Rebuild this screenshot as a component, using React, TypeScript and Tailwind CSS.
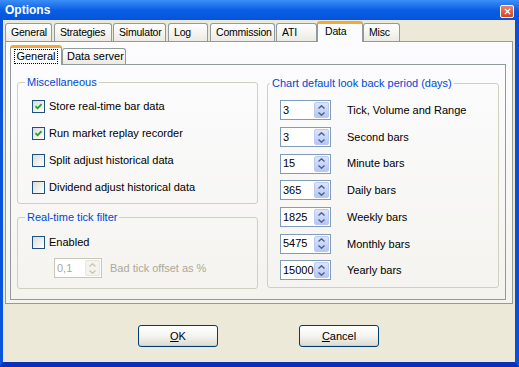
import React from "react";

type Tab = { label: string; width: number; ml: number; selected?: boolean };

const topTabs: Tab[] = [
  { label: "General", width: 47, ml: 0 },
  { label: "Strategies", width: 58, ml: 2 },
  { label: "Simulator", width: 53, ml: 1 },
  { label: "Log", width: 40, ml: 2 },
  { label: "Commission", width: 65, ml: 2 },
  { label: "ATI", width: 41, ml: 1 },
  { label: "Data", width: 46, ml: 0, selected: true },
  { label: "Misc", width: 37, ml: 0 },
];

const lookBack = [
  { value: "3", label: "Tick, Volume and Range" },
  { value: "3", label: "Second bars" },
  { value: "15", label: "Minute bars" },
  { value: "365", label: "Daily bars" },
  { value: "1825", label: "Weekly bars" },
  { value: "5475", label: "Monthly bars" },
  { value: "15000", label: "Yearly bars" },
];

function Check({ checked, label }: { checked?: boolean; label: string }) {
  return (
    <div className="flex h-[27px] items-center">
      <span className="flex h-[13px] w-[13px] shrink-0 items-center justify-center border border-[#1c5180] bg-linear-to-br from-[#dcdcd7] to-white">
        {checked && (
          <svg viewBox="0 0 7 7" className="h-[7px] w-[7px]">
            <path d="M0.5 3.2 L2.6 5.3 L6.5 1.2" stroke="#21a121" strokeWidth="1.8" fill="none" />
          </svg>
        )}
      </span>
      <span className="ml-[4px]">{label}</span>
    </div>
  );
}

function SpinArrows({ disabled }: { disabled?: boolean }) {
  const fill = disabled ? "#c9c7ba" : "#4d6185";
  return (
    <div
      className={
        "flex h-[16px] w-[15px] shrink-0 flex-col rounded-[2px] border " +
        (disabled
          ? "border-[#e8e6dc] bg-[#f4f3ee]"
          : "border-[#b9c9ef] bg-linear-to-b from-[#dbe5fc] to-[#b4c7f4]")
      }
    >
      <span className="flex flex-1 items-center justify-center">
        <svg viewBox="0 0 7 4" className="h-[4px] w-[7px]">
          <path d="M0.5 3.5 L3.5 0.8 L6.5 3.5" stroke={fill} strokeWidth="1.4" fill="none" />
        </svg>
      </span>
      <span className="flex flex-1 items-center justify-center">
        <svg viewBox="0 0 7 4" className="h-[4px] w-[7px]">
          <path d="M0.5 0.5 L3.5 3.2 L6.5 0.5" stroke={fill} strokeWidth="1.4" fill="none" />
        </svg>
      </span>
    </div>
  );
}

function Spin({ value, disabled, width }: { value: string; disabled?: boolean; width: string }) {
  return (
    <div
      className={
        "flex h-[20px] shrink-0 items-center border pl-[2px] pr-[1px] " +
        width +
        (disabled ? " border-[#c9c7ba] bg-white text-[#aca899]" : " border-[#7f9db9] bg-white text-black")
      }
    >
      <span className="flex-1 leading-none">{value}</span>
      <SpinArrows disabled={disabled} />
    </div>
  );
}

function XpButton({ label }: { label: string }) {
  return (
    <button
      type="button"
      className="flex h-[22px] w-[80px] items-center justify-center rounded-[3px] border border-[#003c74] bg-linear-to-b from-white via-[#f4f4f0] to-[#dcdad0] text-black shadow-[inset_0_-1px_0_#d6d0c5]"
    >
      <span>
        <span className="underline">{label[0]}</span>
        {label.slice(1)}
      </span>
    </button>
  );
}

export default function App() {
  return (
    <div className="flex h-[367px] w-[519px] flex-col bg-[#ece9d8] font-['Liberation_Sans',Arial,sans-serif] text-[11px] text-black">
      {/* Title bar */}
      <div className="flex h-[20px] shrink-0 items-center justify-between bg-linear-to-b from-[#3c8ef6] via-[#0a5fe4] to-[#0653dc] pl-[5px] pr-[5px]">
        <span className="text-[12px] font-bold text-white">Options</span>
        <span className="mt-[2px] flex h-[13px] w-[14px] items-center justify-center rounded-[2px] border border-white bg-linear-to-b from-[#e9826a] to-[#d4451f]">
          <svg viewBox="0 0 8 8" className="h-[7px] w-[7px]">
            <path d="M1 1 L7 7 M7 1 L1 7" stroke="white" strokeWidth="1.6" />
          </svg>
        </span>
      </div>

      {/* Body */}
      <div className="flex flex-1 flex-col border-b-[5px] border-l-[3px] border-r-[4px] border-b-[#0a2fb8] border-l-[#0a55dc] border-r-[#0a4fd6]">
        {/* Top tabs */}
        <div className="flex h-[21px] shrink-0 items-end pl-[2px] text-[10.5px] tracking-[-0.2px]">
          {topTabs.map((t) => (
            <div
              key={t.label}
              style={{ width: t.width, marginLeft: t.ml }}
              className={
                "flex shrink-0 items-center overflow-hidden whitespace-nowrap rounded-t-[3px] border border-b-0 border-[#919b9c] pl-[5px] " +
                (t.selected
                  ? "relative z-10 mb-[-1px] h-[21px] border-t-[3px] border-t-[#f3a83a] bg-[#fcfcfe] pb-[2px] pl-[7px]"
                  : "h-[18px] bg-linear-to-b from-white to-[#eceae2]")
              }
            >
              {t.label}
            </div>
          ))}
        </div>

        {/* Outer tab panel */}
        <div className="mx-[2px] flex h-[263px] shrink-0 flex-col border border-[#919b9c] bg-linear-to-b from-[#fcfcfe] to-[#f4f3ee] pl-[4px]">
          {/* Sub tabs */}
          <div className="flex h-[22px] shrink-0 items-end">
            <div className="relative z-10 mb-[-1px] flex h-[20px] w-[52px] shrink-0 items-start justify-center rounded-t-[3px] border border-b-0 border-[#919b9c] border-t-[3px] border-t-[#f3a83a] bg-[#fcfcfe] pt-[1px]">
              <span className="border border-dotted border-black px-[1px] leading-[13px]">General</span>
            </div>
            <div className="flex h-[16px] w-[64px] shrink-0 items-center whitespace-nowrap rounded-t-[3px] border border-b-0 border-[#919b9c] bg-linear-to-b from-white to-[#eceae2] pl-[4px]">
              Data server
            </div>
          </div>

          {/* Inner panel */}
          <div className="flex h-[236px] w-[496px] shrink-0 gap-[9px] border border-[#919b9c] bg-linear-to-b from-[#fcfcfe] to-[#f4f3ee] pl-[6px] pt-[10px]">
            {/* Left column */}
            <div className="flex w-[241px] shrink-0 flex-col gap-[6px]">
              <fieldset className="h-[129px] rounded-[3px] border border-[#d0d0bf]">
                <legend className="ml-[7px] px-[2px] leading-[14px] text-[#0046d5]">Miscellaneous</legend>
                <div className="pl-[14px] pt-[4px]">
                  <Check checked label="Store real-time bar data" />
                  <Check checked label="Run market replay recorder" />
                  <Check label="Split adjust historical data" />
                  <Check label="Dividend adjust historical data" />
                </div>
              </fieldset>
              <fieldset className="h-[79px] rounded-[3px] border border-[#d0d0bf]">
                <legend className="ml-[7px] px-[2px] leading-[14px] text-[#0046d5]">Real-time tick filter</legend>
                <div className="pl-[14px] pt-[5px]">
                  <Check label="Enabled" />
                  <div className="flex h-[24px] items-center pl-[22px]">
                    <Spin value="0,1" disabled width="w-[48px]" />
                    <span className="ml-[8px] text-[#aca899]">Bad tick offset as %</span>
                  </div>
                </div>
              </fieldset>
            </div>

            {/* Right column */}
            <fieldset className="mt-[1px] h-[212px] w-[232px] shrink-0 rounded-[3px] border border-[#d0d0bf]">
              <legend className="ml-[2px] px-[2px] leading-[14px] text-[#0046d5]">
                Chart default look back period (days)
              </legend>
              <div className="pl-[12px] pt-[7px]">
                {lookBack.map((r) => (
                  <div key={r.label} className="flex h-[26.7px] items-center">
                    <Spin value={r.value} width="w-[51px]" />
                    <span className="ml-[16px]">{r.label}</span>
                  </div>
                ))}
              </div>
            </fieldset>
          </div>
        </div>

        {/* Buttons */}
        <div className="mt-[21px] flex gap-[81px] pl-[135px]">
          <XpButton label="OK" />
          <XpButton label="Cancel" />
        </div>
      </div>
    </div>
  );
}
